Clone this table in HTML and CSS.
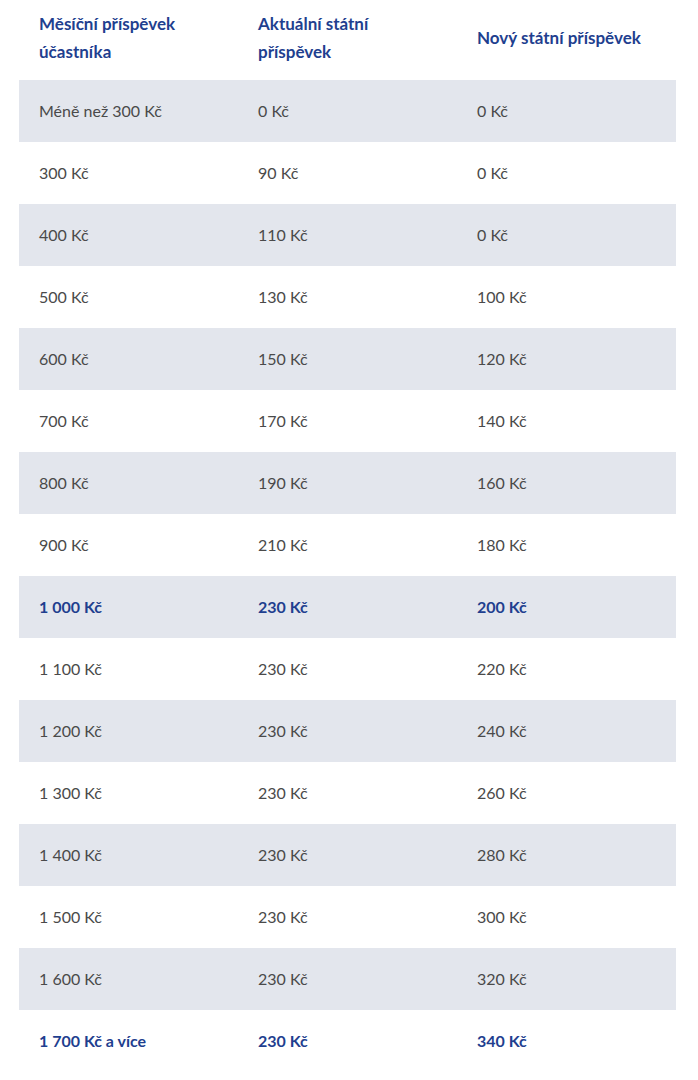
FILE: index.html
```html
<!DOCTYPE html>
<html lang="cs">
<head>
<meta charset="utf-8">
<title>Příspěvky</title>
<link rel="stylesheet" href="styles.css">
</head>
<body>
<table class="contrib">
  <thead>
    <tr>
      <th>Měsíční příspěvek účastníka</th>
      <th>Aktuální státní příspěvek</th>
      <th>Nový státní příspěvek</th>
    </tr>
  </thead>
  <tbody>
    <tr><td>Méně než 300 Kč</td><td>0 Kč</td><td>0 Kč</td></tr>
    <tr><td>300 Kč</td><td>90 Kč</td><td>0 Kč</td></tr>
    <tr><td>400 Kč</td><td>110 Kč</td><td>0 Kč</td></tr>
    <tr><td>500 Kč</td><td>130 Kč</td><td>100 Kč</td></tr>
    <tr><td>600 Kč</td><td>150 Kč</td><td>120 Kč</td></tr>
    <tr><td>700 Kč</td><td>170 Kč</td><td>140 Kč</td></tr>
    <tr><td>800 Kč</td><td>190 Kč</td><td>160 Kč</td></tr>
    <tr><td>900 Kč</td><td>210 Kč</td><td>180 Kč</td></tr>
    <tr class="hl"><td>1 000 Kč</td><td>230 Kč</td><td>200 Kč</td></tr>
    <tr><td>1 100 Kč</td><td>230 Kč</td><td>220 Kč</td></tr>
    <tr><td>1 200 Kč</td><td>230 Kč</td><td>240 Kč</td></tr>
    <tr><td>1 300 Kč</td><td>230 Kč</td><td>260 Kč</td></tr>
    <tr><td>1 400 Kč</td><td>230 Kč</td><td>280 Kč</td></tr>
    <tr><td>1 500 Kč</td><td>230 Kč</td><td>300 Kč</td></tr>
    <tr><td>1 600 Kč</td><td>230 Kč</td><td>320 Kč</td></tr>
    <tr class="hl"><td>1 700 Kč a více</td><td>230 Kč</td><td>340 Kč</td></tr>
  </tbody>
</table>
</body>
</html>
```

FILE: styles.css
```css
html, body {
  margin: 0;
  padding: 0;
  background: #ffffff;
}

body {
  font-family: Lato, "Liberation Sans", sans-serif;
  font-size: 16px;
  color: #4a4a4a;
}

.contrib {
  margin-left: 19px;
  width: 657px;
  border-collapse: collapse;
  table-layout: fixed;
}

.contrib th {
  text-align: left;
  vertical-align: middle;
  font-size: 17px;
  font-weight: 700;
  color: #1f3f8f;
  line-height: 28px;
  height: 80px;
  padding: 9px 20px 14px 20px;
  width: 219px;
  box-sizing: border-box;
}

.contrib td {
  height: 62px;
  padding: 0 20px;
  vertical-align: middle;
  line-height: 20px;
  box-sizing: border-box;
}

.contrib tbody tr:nth-child(odd) td {
  background: #e3e6ed;
}

.contrib tr.hl td {
  color: #1f3f8f;
  font-weight: 700;
}
```
